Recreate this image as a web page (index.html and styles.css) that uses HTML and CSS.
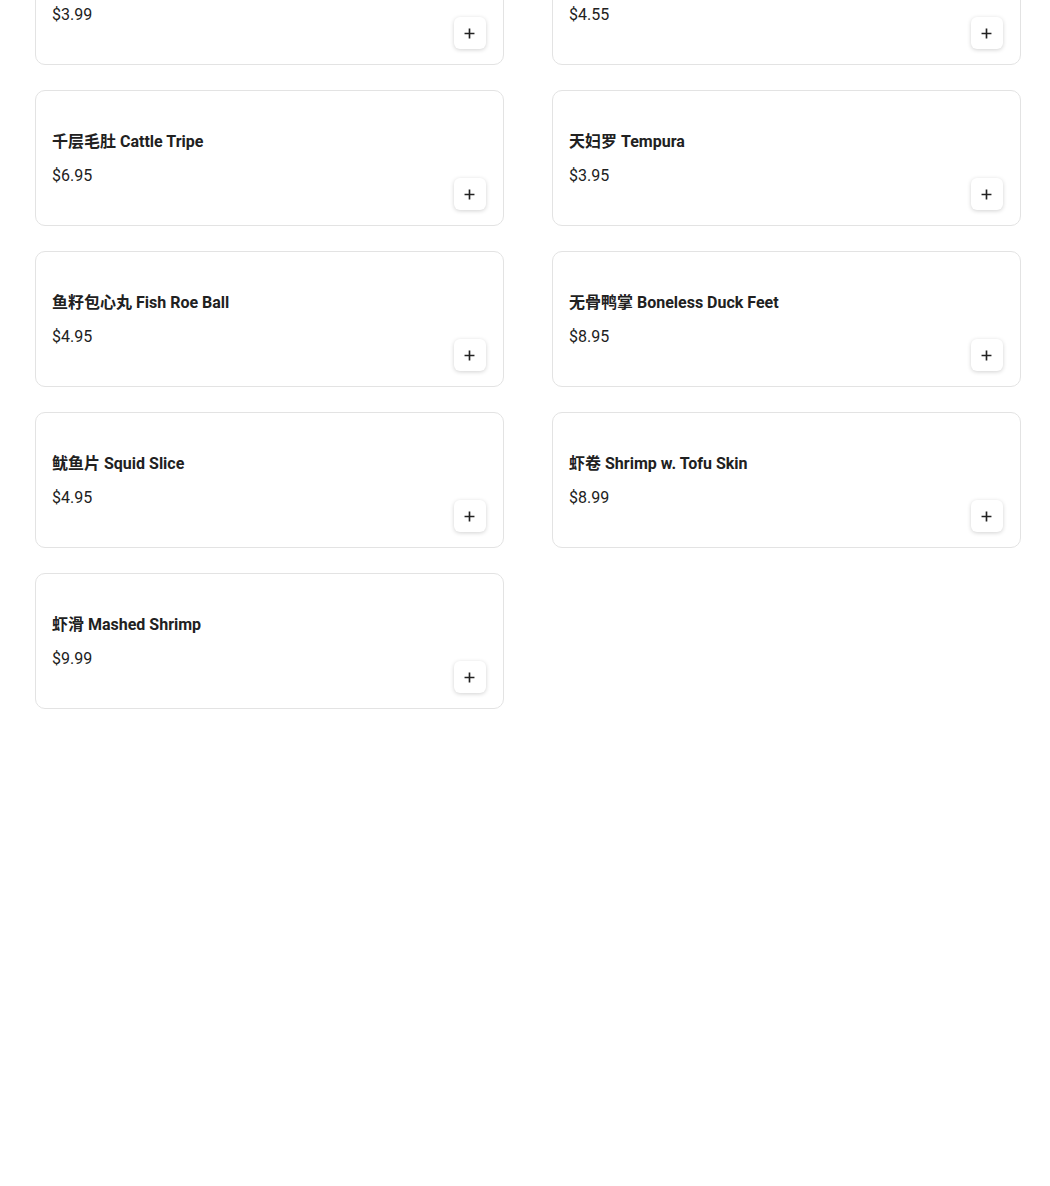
FILE: index.html
```html
<!DOCTYPE html>
<html>

<head>
    <meta charset="UTF-8">
    <meta name="viewport" content="width=device-width, initial-scale=1.0" />
    <title>菜单</title>
    <link rel="stylesheet" href="styles.css">
</head>

<body>
    <div class="menu">
        <ul class="items">
            <li class="item">
                <div class="info">
                    <h3 class="name">午餐肉 Luncheon Meat</h3>
                    <div class="price">$3.99</div>
                </div>
                <button class="add" type="button"><svg viewBox="0 0 10 10"><path d="M5 0.5v9M0.5 5h9" /></svg></button>
            </li>
            <li class="item">
                <div class="info">
                    <h3 class="name">冻豆腐 Frozen Tofu</h3>
                    <div class="price">$4.55</div>
                </div>
                <button class="add" type="button"><svg viewBox="0 0 10 10"><path d="M5 0.5v9M0.5 5h9" /></svg></button>
            </li>
            <li class="item">
                <div class="info">
                    <h3 class="name">千层毛肚 Cattle Tripe</h3>
                    <div class="price">$6.95</div>
                </div>
                <button class="add" type="button"><svg viewBox="0 0 10 10"><path d="M5 0.5v9M0.5 5h9" /></svg></button>
            </li>
            <li class="item">
                <div class="info">
                    <h3 class="name">天妇罗 Tempura</h3>
                    <div class="price">$3.95</div>
                </div>
                <button class="add" type="button"><svg viewBox="0 0 10 10"><path d="M5 0.5v9M0.5 5h9" /></svg></button>
            </li>
            <li class="item">
                <div class="info">
                    <h3 class="name">鱼籽包心丸 Fish Roe Ball</h3>
                    <div class="price">$4.95</div>
                </div>
                <button class="add" type="button"><svg viewBox="0 0 10 10"><path d="M5 0.5v9M0.5 5h9" /></svg></button>
            </li>
            <li class="item">
                <div class="info">
                    <h3 class="name">无骨鸭掌 Boneless Duck Feet</h3>
                    <div class="price">$8.95</div>
                </div>
                <button class="add" type="button"><svg viewBox="0 0 10 10"><path d="M5 0.5v9M0.5 5h9" /></svg></button>
            </li>
            <li class="item">
                <div class="info">
                    <h3 class="name">鱿鱼片 Squid Slice</h3>
                    <div class="price">$4.95</div>
                </div>
                <button class="add" type="button"><svg viewBox="0 0 10 10"><path d="M5 0.5v9M0.5 5h9" /></svg></button>
            </li>
            <li class="item">
                <div class="info">
                    <h3 class="name">虾卷 Shrimp w. Tofu Skin</h3>
                    <div class="price">$8.99</div>
                </div>
                <button class="add" type="button"><svg viewBox="0 0 10 10"><path d="M5 0.5v9M0.5 5h9" /></svg></button>
            </li>
            <li class="item">
                <div class="info">
                    <h3 class="name">虾滑 Mashed Shrimp</h3>
                    <div class="price">$9.99</div>
                </div>
                <button class="add" type="button"><svg viewBox="0 0 10 10"><path d="M5 0.5v9M0.5 5h9" /></svg></button>
            </li>
        </ul>
    </div>
</body>

</html>
```

FILE: styles.css
```css
body {
    margin: 0;
    background: #fff;
    font-family: Roboto, "Noto Sans CJK SC", sans-serif;
    color: #212121;
}

/* page is scrolled: first row sits partly above the top edge */
.menu {
    margin-top: -71px;
    padding: 0 29.5px 0 35px;
}

.items {
    list-style-type: none;
    margin: 0;
    padding: 0;
    display: grid;
    grid-template-columns: 1fr 1fr;
    column-gap: 48.5px;
    row-gap: 25px;
}

.item {
    box-sizing: border-box;
    height: 136px;
    border: 1px solid #e3e3e3;
    border-radius: 10px;
    padding: 16px 17px 15px 16px;
    display: flex;
    justify-content: space-between;
    align-items: flex-end;
}

.info {
    align-self: flex-start;
    padding-top: 23px;
}

.name {
    margin: 0;
    font-size: 16px;
    font-weight: 700;
    line-height: 24px;
}

.price {
    margin-top: 10px;
    font-size: 16px;
    line-height: 24px;
}

.add {
    width: 32px;
    height: 32px;
    padding: 0;
    border: none;
    border-radius: 6px;
    background: #fff;
    box-shadow: 0 1px 4px rgba(0, 0, 0, .18);
    display: flex;
    align-items: center;
    justify-content: center;
    cursor: pointer;
}

.add svg {
    width: 11px;
    height: 11px;
}

.add path {
    stroke: #222;
    stroke-width: 1.5;
    fill: none;
}
```
